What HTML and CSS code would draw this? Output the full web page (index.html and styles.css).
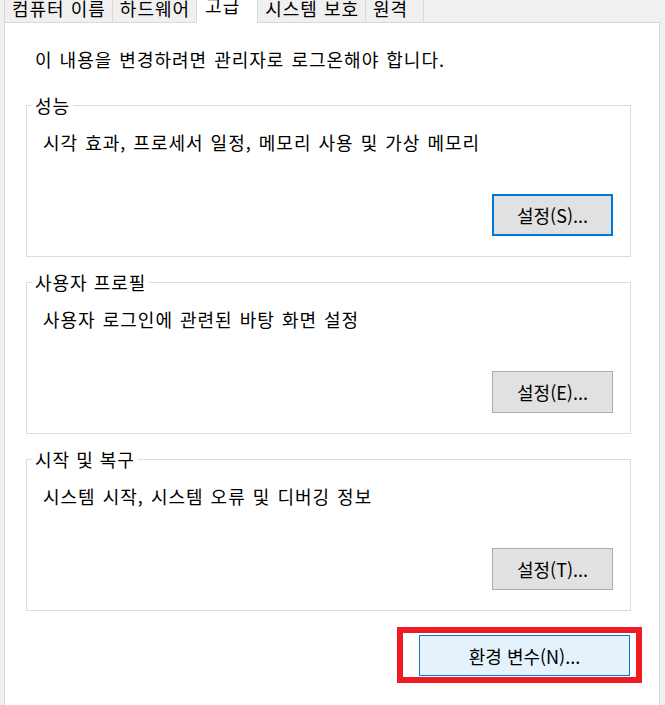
FILE: index.html
```html
<!DOCTYPE html>
<html lang="ko">
<head>
    <meta charset="UTF-8">
    <meta name="viewport" content="width=device-width, initial-scale=1.0">
    <title>시스템 속성</title>
    <link rel="stylesheet" href="styles.css">
</head>
<body>
    <div class="tabs">
        <div class="tab">컴퓨터 이름</div>
        <div class="tab">하드웨어</div>
        <div class="tab active">고급</div>
        <div class="tab">시스템 보호</div>
        <div class="tab tab-last">원격</div>
    </div>
    <div class="panel">
        <p class="intro">이 내용을 변경하려면 관리자로 로그온해야 합니다.</p>

        <fieldset class="group">
            <legend>성능</legend>
            <div class="group-body">
                <p class="desc">시각 효과, 프로세서 일정, 메모리 사용 및 가상 메모리</p>
                <button class="btn focused">설정(S)...</button>
            </div>
        </fieldset>

        <fieldset class="group">
            <legend>사용자 프로필</legend>
            <div class="group-body">
                <p class="desc">사용자 로그인에 관련된 바탕 화면 설정</p>
                <button class="btn">설정(E)...</button>
            </div>
        </fieldset>

        <fieldset class="group">
            <legend>시작 및 복구</legend>
            <div class="group-body">
                <p class="desc">시스템 시작, 시스템 오류 및 디버깅 정보</p>
                <button class="btn">설정(T)...</button>
            </div>
        </fieldset>

        <div class="footer">
            <div class="highlight">
                <button class="btn env">환경 변수(N)...</button>
            </div>
        </div>
    </div>
</body>
</html>
```

FILE: styles.css
```css
body {
    margin: 0;
    background-color: #f0f0f0;
    font-family: "Noto Sans CJK KR", "Noto Sans", sans-serif;
    font-size: 18px;
    letter-spacing: 1px;
    color: #000;
    overflow: hidden;
}
.tabs {
    display: flex;
    padding-left: 4px;
    height: 22px;
}
.tab {
    height: 22px;
    line-height: 17px;
    padding: 0 6px 0 7px;
    border-left: 1px solid #d9d9d9;
    background-color: #f0f0f0;
    white-space: nowrap;
}
.tab-last {
    padding-right: 15px;
    border-right: 1px solid #d9d9d9;
}
.tab.active {
    height: 23px;
    line-height: 11px;
    padding: 0 17px 0 8px;
    background-color: #fff;
    border-right: 1px solid #d9d9d9;
    position: relative;
    z-index: 1;
}
.tab.active + .tab {
    border-left: none;
}
.panel {
    width: 654px;
    height: 700px;
    margin-left: 4px;
    border: 1px solid #d9d9d9;
    background-color: #fff;
    padding-top: 24px;
}
.intro {
    margin: 0 0 22px 30px;
    line-height: 24px;
    word-spacing: 1px;
}
.group {
    margin: 0 28px 13px 21px;
    padding: 0;
    border: 1px solid #dcdcdc;
    min-width: 0;
}
.group legend {
    margin-left: 5px;
    padding: 0 3px;
    line-height: 24px;
}
.group-body {
    display: flex;
    flex-direction: column;
    padding: 13px 17px 20px 16px;
}
.desc {
    margin: 0;
    line-height: 24px;
    word-spacing: 1px;
}
.btn {
    font-family: inherit;
    font-size: 18px;
    letter-spacing: 0;
    color: #000;
    background-color: #e1e1e1;
    border: 1px solid #adadad;
    border-radius: 0;
    padding: 0;
    cursor: pointer;
}
.group .btn {
    align-self: flex-end;
    width: 121px;
    height: 42px;
    margin-top: 40px;
}
.group .btn.focused {
    border: 2px solid #0078d7;
}
.footer {
    display: flex;
    justify-content: flex-end;
    padding-right: 17px;
    margin-top: 16px;
}
.highlight {
    border: 6px solid #ed1c24;
    padding: 2px 6px 1px 16px;
}
.btn.env {
    width: 211px;
    height: 41px;
    background-color: #e5f1fb;
    border-color: #0078d7;
}
```
